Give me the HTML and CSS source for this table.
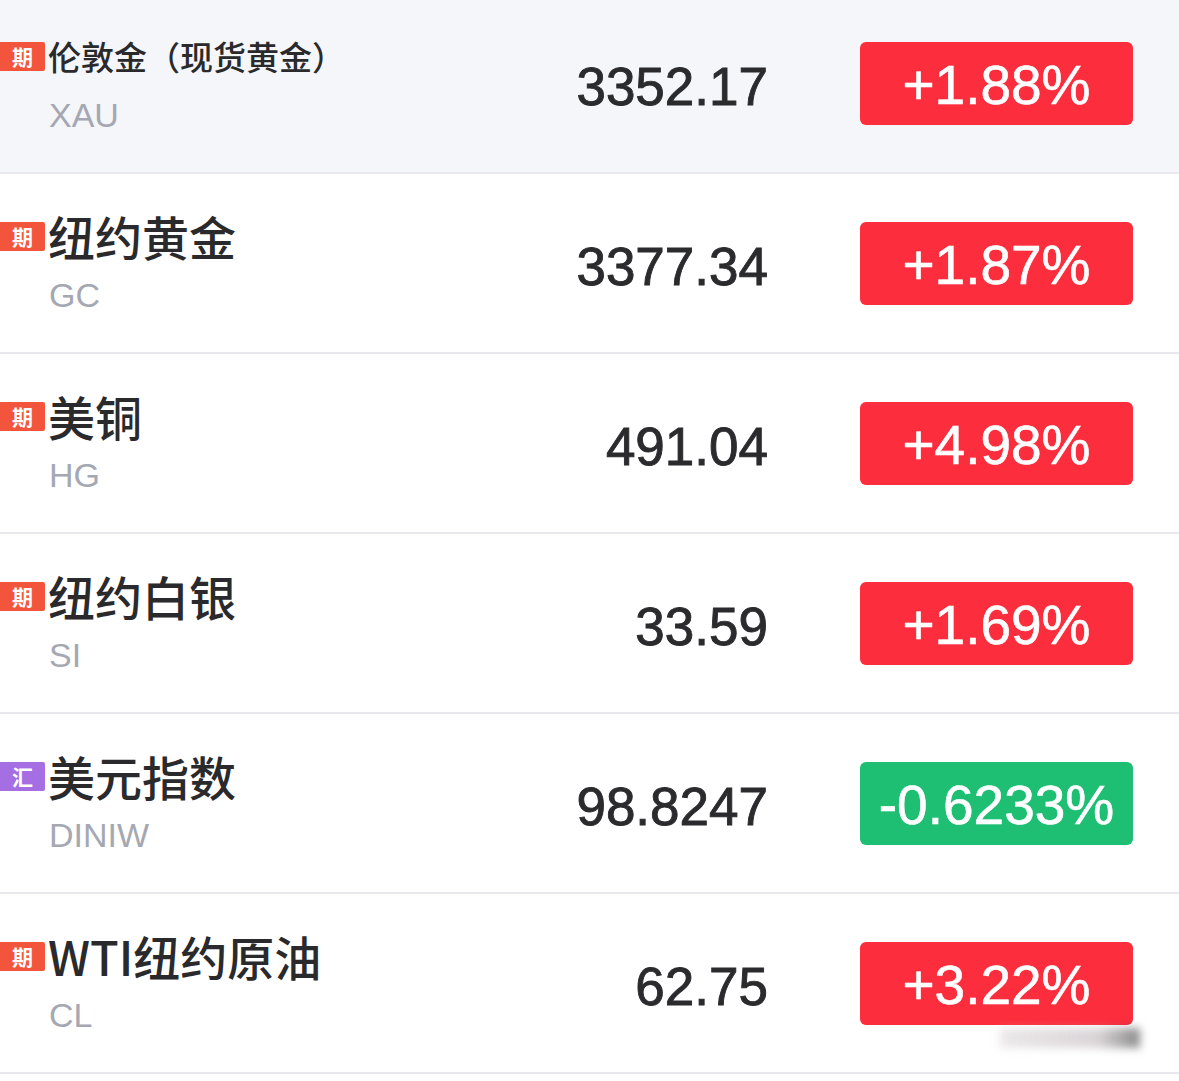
FILE: index.html
```html
<!DOCTYPE html>
<html lang="zh-CN">
<head>
<meta charset="utf-8">
<title>行情</title>
<link rel="stylesheet" href="styles.css">
</head>
<body>
<div class="list">
  <div class="row row-active">
    <div class="info">
      <div class="name-line"><span class="tag tag-qi">期</span><span class="name name-sm">伦敦金（现货黄金）</span></div>
      <div class="code">XAU</div>
    </div>
    <div class="price">3352.17</div>
    <div class="pill up">+1.88%</div>
  </div>
  <div class="row">
    <div class="info">
      <div class="name-line"><span class="tag tag-qi">期</span><span class="name">纽约黄金</span></div>
      <div class="code">GC</div>
    </div>
    <div class="price">3377.34</div>
    <div class="pill up">+1.87%</div>
  </div>
  <div class="row">
    <div class="info">
      <div class="name-line"><span class="tag tag-qi">期</span><span class="name">美铜</span></div>
      <div class="code">HG</div>
    </div>
    <div class="price">491.04</div>
    <div class="pill up">+4.98%</div>
  </div>
  <div class="row">
    <div class="info">
      <div class="name-line"><span class="tag tag-qi">期</span><span class="name">纽约白银</span></div>
      <div class="code">SI</div>
    </div>
    <div class="price">33.59</div>
    <div class="pill up">+1.69%</div>
  </div>
  <div class="row">
    <div class="info">
      <div class="name-line"><span class="tag tag-hui">汇</span><span class="name">美元指数</span></div>
      <div class="code">DINIW</div>
    </div>
    <div class="price">98.8247</div>
    <div class="pill down">-0.6233%</div>
  </div>
  <div class="row">
    <div class="info">
      <div class="name-line"><span class="tag tag-qi">期</span><span class="name">WTI纽约原油</span></div>
      <div class="code">CL</div>
    </div>
    <div class="price">62.75</div>
    <div class="pill up">+3.22%</div>
  </div>
</div>
<div class="watermark"></div>
</body>
</html>
```
FILE: styles.css
```css
html, body {
  margin: 0;
  padding: 0;
  background: #ffffff;
  overflow: hidden;
}
body {
  width: 1179px;
  height: 1081px;
  position: relative;
  font-family: "Liberation Sans", "Noto Sans CJK SC", sans-serif;
}
.list {
  margin-top: -6px;
}
.row {
  display: flex;
  align-items: center;
  height: 178px;
  border-bottom: 2px solid #e9e9ed;
  padding-right: 46px;
  background: #ffffff;
}
.row-active {
  background: #f5f6fa;
}
.info {
  flex: 1;
  display: flex;
  flex-direction: column;
  gap: 14px;
}
.name-line {
  display: flex;
  align-items: center;
  height: 50px;
}
.tag {
  display: flex;
  align-items: center;
  justify-content: center;
  width: 45px;
  height: 29px;
  color: #ffffff;
  font-family: "Noto Sans CJK SC", sans-serif;
  font-weight: 700;
  font-size: 21px;
  line-height: 29px;
  margin-right: 3px;
  border-radius: 0 2px 2px 0;
}
.tag-qi {
  background: #f2553c;
}
.tag-hui {
  background: #a66ee3;
}
.name {
  font-family: "Noto Sans CJK SC", sans-serif;
  font-size: 47px;
  font-weight: 500;
  color: #2a2a2c;
  line-height: 50px;
}
.name-sm {
  font-size: 33px;
}
.code {
  font-family: "Liberation Sans", sans-serif;
  font-size: 34px;
  line-height: 40px;
  color: #a5a8b2;
  padding-left: 49px;
}
.price {
  font-family: "Liberation Sans", sans-serif;
  font-size: 53px;
  line-height: 1;
  color: #2b2b2e;
  -webkit-text-stroke: 0.9px #2b2b2e;
  text-align: right;
  margin-right: 92px;
  margin-top: 6px;
}
.pill {
  width: 273px;
  height: 83px;
  border-radius: 6px;
  display: flex;
  align-items: center;
  justify-content: center;
  color: #ffffff;
  -webkit-text-stroke: 0.6px #ffffff;
  font-family: "Liberation Sans", sans-serif;
  font-size: 55px;
  line-height: 1;
  padding-top: 4px;
  box-sizing: border-box;
}
.up {
  background: #fc2d3d;
}
.down {
  background: #1ebf73;
}
.watermark {
  position: absolute;
  left: 1000px;
  top: 1028px;
  width: 140px;
  height: 20px;
  background: linear-gradient(90deg, rgba(200,190,195,0.35), rgba(180,170,175,0.5) 70%, rgba(60,60,60,0.6));
  filter: blur(4px);
}
```
